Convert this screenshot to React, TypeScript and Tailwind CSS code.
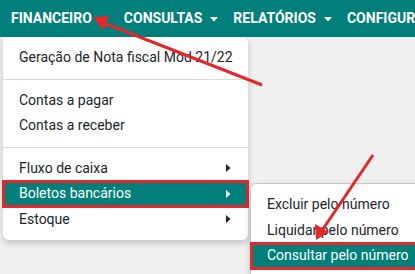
import React from "react";

const Caret = () => (
  <svg width="8" height="5" viewBox="0 0 8 5" className="ml-[8px] mt-[1px]">
    <path d="M0 0 L8 0 L4 4.5 Z" fill="white" />
  </svg>
);

const Right = () => (
  <svg width="5" height="8" viewBox="0 0 5 8">
    <path d="M0 0 L4.5 4 L0 8 Z" fill="currentColor" />
  </svg>
);

const Item = ({ children, sub, active }: { children: React.ReactNode; sub?: boolean; active?: boolean }) => (
  <div
    className={
      "flex items-center justify-between whitespace-nowrap h-[25.5px] pl-4 pr-[17px] " +
      (active ? "bg-[#017f7b] text-white outline outline-[3px] outline-[#e5262a] -outline-offset-[2px]" : "text-[#212529]")
    }
  >
    <span>{children}</span>
    {sub && <Right />}
  </div>
);

const Divider = () => <div className="my-2 h-px bg-[#dcdcdc]" />;

export default function App() {
  return (
    <div
      className="relative w-[415px] h-[274px] overflow-hidden bg-[#f0f0f0] text-[14px]"
      style={{ fontFamily: "Roboto, 'Noto Sans', sans-serif" }}
    >
      <nav className="h-[37px] bg-[#017f7b] flex items-center pl-[11px] text-white font-bold text-[14px] whitespace-nowrap">
        <div className="flex items-center">FINANCEIRO<Caret /></div>
        <div className="flex items-center ml-[16px]">CONSULTAS<Caret /></div>
        <div className="flex items-center ml-[15px]">RELATÓRIOS<Caret /></div>
        <div className="flex items-center ml-[15px]">CONFIGURAÇÕES</div>
      </nav>

      <div className="flex">
        <div className="ml-[3px] w-[245px] bg-white rounded-b-[6px] rounded-tr-[6px] py-2 shadow-[0_3px_6px_rgba(0,0,0,0.2)]">
          <Item>Geração de Nota fiscal Mod 21/22</Item>
          <Divider />
          <Item>Contas a pagar</Item>
          <Item>Contas a receber</Item>
          <Divider />
          <Item sub>Fluxo de caixa</Item>
          <Item sub active>Boletos bancários</Item>
          <Item sub>Estoque</Item>
        </div>
      </div>

      <div className="absolute left-[250px] top-[183px] w-[180px] bg-white rounded-tl-[6px] border-t border-l border-[#c8c8c8] py-2 shadow-[0_3px_6px_rgba(0,0,0,0.2)]">
        <Item>Excluir pelo número</Item>
        <Item>Liquidar pelo número</Item>
        <Item active>Consultar pelo número</Item>
      </div>

      <svg className="absolute inset-0 pointer-events-none" width="415" height="274" viewBox="0 0 415 274">
        <line x1="262" y1="85" x2="104" y2="23" stroke="#e5262a" strokeWidth="3" />
        <polygon points="93,17 109,16 103,30" fill="#e5262a" />
        <line x1="373" y1="155" x2="323" y2="229" stroke="#e5262a" strokeWidth="3" />
        <polygon points="316,240 315,224 329,232" fill="#e5262a" />
      </svg>
    </div>
  );
}
